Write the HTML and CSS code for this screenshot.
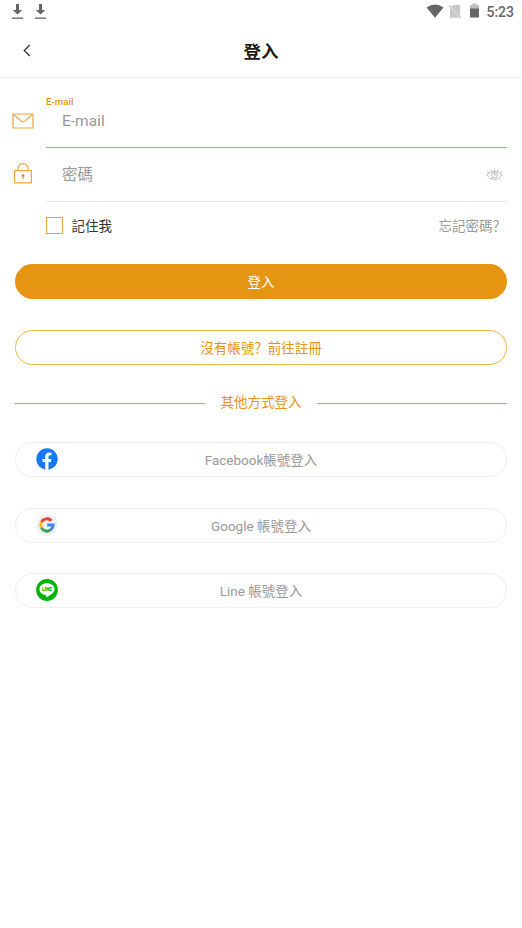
FILE: index.html
```html
<!DOCTYPE html>
<html lang="zh">
<head>
<meta charset="utf-8">
<title>登入</title>
<link rel="stylesheet" href="styles.css">
</head>
<body>
<div class="status">
  <div class="downloads">
    <svg width="13" height="17" viewBox="0 0 13 17"><path d="M5 1h3v6h3.200L6.500 11.600 1.800 7H5z" fill="#666"/><path d="M1 15.200h11" stroke="#777" stroke-width="1.500"/></svg>
    <svg width="13" height="17" viewBox="0 0 13 17"><path d="M5 1h3v6h3.200L6.500 11.600 1.800 7H5z" fill="#666"/><path d="M1 15.200h11" stroke="#777" stroke-width="1.500"/></svg>
  </div>
  <div class="system">
    <svg width="18" height="14" viewBox="0 0 18 14"><path d="M.5 3.500Q9-2.500 17.500 3.500L9 13.800z" fill="#666"/></svg>
    <svg class="sim" width="14" height="15" viewBox="0 0 14 15"><path d="M5.500 1H12v10.500L3.200 2.700zM2 4l9.500 9.800H2z" fill="#c6c6c6"/><path d="M1 1.500 13 14" stroke="#c6c6c6" stroke-width="1.300"/></svg>
    <svg class="battery" width="9" height="15" viewBox="0 0 9 15"><path d="M0 2h2.500V.5h4V2H9v4H0z" fill="#bdbdbd"/><path d="M0 5.500h9V14.500H0z" fill="#666"/></svg>
    <span class="time">5:23</span>
  </div>
</div>
<header class="header">
  <svg class="back" width="8" height="13" viewBox="0 0 8 13"><path d="M6.800 1 1.300 6.500 6.800 12" fill="none" stroke="#333" stroke-width="1.300"/></svg>
  <h1>登入</h1>
</header>
<main>
  <div class="row email">
    <svg class="mail" width="22" height="16" viewBox="0 0 22 16"><g fill="none" stroke="#eba63c" stroke-width="1.200"><path d="M1 1h20v14H1z"/><path d="M1.300 1.300 9.600 8.400Q11 9.500 12.400 8.400L20.700 1.300"/></g></svg>
    <div class="field active"><span class="label">E-mail</span><span class="placeholder">E-mail</span></div>
  </div>
  <div class="row password">
    <svg class="lock" width="18" height="21" viewBox="0 0 18 21"><g fill="none" stroke="#eba63c" stroke-width="1.200"><path d="M.6 7.600h16.800v12.200H.6zM4 7.500V5.600a5 5 0 0 1 10 0v1.900"/></g><circle cx="9" cy="12.500" r="1.500" fill="#d99630"/><path d="M9 13v3" stroke="#d99630" stroke-width="1.200"/></svg>
    <div class="field"><span class="placeholder">密碼</span>
      <svg class="eye" width="17" height="13" viewBox="0 0 17 13"><g fill="none" stroke="#b3b3b3" stroke-width=".9"><path d="M.7 7Q8.500-.3 16.300 7 8.500 16.500.7 7z"/><circle cx="8.500" cy="7" r="2.900"/><path d="M8.500 3.300V.7M5.600 3.800 4.600 1.500M11.400 3.800l1-2.300M3 5 1.200 3.500M14 5l1.800-1.500M8.500 5v1.800h1.800"/></g></svg>
    </div>
  </div>
  <div class="options">
    <span class="check"></span><span class="remember">記住我</span><span class="forgot">忘記密碼？</span>
  </div>
  <div class="button primary">登入</div>
  <div class="button outline">沒有帳號？前往註冊</div>
  <div class="divider">其他方式登入</div>
  <div class="button social">
    <svg class="logo" width="22" height="22" viewBox="0 0 22 22"><circle cx="11" cy="11" r="10.700" fill="#1877f2"/><path d="M9.200 21.700V14H6.500v-3h2.700V8.800c0-2.800 1.600-4.300 4.100-4.300 1 0 2.200.2 2.200.2v2.600h-1.300c-1.300 0-1.700.8-1.700 1.600V11h2.900l-.5 3h-2.400v7.700z" fill="#fff"/></svg>
    <span class="caption">Facebook帳號登入</span>
  </div>
  <div class="button social">
    <svg class="logo" width="22" height="22" viewBox="0 0 22 22"><circle cx="11" cy="11" r="10.700" fill="#eef2f3"/><g fill="none" stroke-width="2.900"><path d="M5.500 8A6.200 6.200 0 0 1 15.500 6.800" stroke="#e34133"/><path d="M5.600 14A6.200 6.200 0 0 1 5.600 7.900" stroke="#f5bb18"/><path d="M15 15.700A6.200 6.200 0 0 1 5.500 13.800" stroke="#35a556"/><path d="M11.200 11h6Q17 14 14.900 15.700" stroke="#4383e8"/></g></svg>
    <span class="caption">Google 帳號登入</span>
  </div>
  <div class="button social">
    <svg class="logo" width="22" height="22" viewBox="0 0 22 22"><circle cx="11" cy="11" r="10.900" fill="#0bb40b"/><path d="M11 4.300c-4.300 0-7.500 2.600-7.500 5.900 0 3 2.500 5.100 6 5.700.9.200.8.800.6 2.600 3.200-1.600 8.400-4.900 8.400-8.300 0-3.300-3.200-5.900-7.500-5.900z" fill="#fff"/><text class="line-word" x="11" y="12" text-anchor="middle">LINE</text></svg>
    <span class="caption">Line 帳號登入</span>
  </div>
</main>
</body>
</html>
```
FILE: styles.css
```css
* { box-sizing: border-box; }
body {
  margin: 0;
  min-height: 928px;
  background: #fff;
  color: #333;
  font: 13.5px/20px Roboto, "Noto Sans CJK SC", sans-serif;
}
svg { display: block; flex: none; }
.status {
  height: 24px;
  display: flex;
  justify-content: space-between;
  padding: 3px 8px 0 11px;
}
.downloads { display: flex; gap: 10px; }
.system { display: flex; align-items: flex-start; }
.system svg { margin-top: 1px; }
.system .sim { margin-left: 4px; }
.system .battery { margin: 0 7px 0 8px; }
.time { font-size: 14px; line-height: 18px; font-weight: 500; color: #666; }
.header {
  height: 54px;
  display: flex;
  align-items: center;
  padding: 0 23px;
  border-bottom: 1px solid #f1f1f1;
}
.header h1 {
  flex: 1;
  margin: 2px 8px 0 0;
  text-align: center;
  font-size: 17.4px;
  line-height: 26px;
  font-weight: 700;
  color: #231815;
}
main { padding: 0 15px; }
.row { display: flex; }
.email { height: 70px; }
.password { height: 54px; }
.mail { margin: 35px 12px 0 -3px; }
.lock { margin: 15px 14px 0 -1px; }
.field {
  flex: 1;
  display: flex;
  align-items: center;
  border-bottom: 1px solid #e6e6e6;
  padding: 0 4px 0 16px;
}
.field.active {
  flex-direction: column;
  align-items: flex-start;
  border-color: #e09a25;
  padding: 18px 0 0;
}
.label { font-size: 9.700px; line-height: 12px; color: #e69512; font-weight: 500; }
.active .placeholder { margin: 2px 0 0 16px; line-height: 22px; }
.placeholder { font-size: 15.500px; line-height: 24px; color: #999; }
.eye { margin-left: auto; }
.options { height: 47px; display: flex; align-items: center; padding-left: 31px; }
.check { width: 17px; height: 17px; margin-top: -1px; border: 1px solid #e8a33b; }
.remember { margin-left: 8.500px; }
.forgot { margin: 0 1px 0 auto; color: #999; }
.button {
  height: 35px;
  border-radius: 18px;
  display: flex;
  align-items: center;
  justify-content: center;
}
.primary { margin-top: 15px; background: #e69512; color: #fff; }
.outline { margin-top: 31px; border: 1px solid #edb943; color: #e69512; }
.divider {
  margin-top: 27px;
  height: 20px;
  display: flex;
  align-items: center;
  gap: 15.500px;
  color: #e69512;
}
.divider::before, .divider::after {
  content: "";
  flex: 1;
  height: 1px;
  margin-top: 2px;
  background: #e0a030;
}
.social {
  display: grid;
  grid-template-columns: 42px 1fr 42px;
  margin-top: 30.700px;
  border: 1px solid #eee;
  color: #999;
  text-align: center;
}
.divider + .social { margin-top: 30px; }
.social .logo { margin: -1px 0 0 19.500px; }
.caption { padding-top: 1px; }
.line-word { font: 900 4.800px Roboto, sans-serif; fill: #0bb40b; }
```
